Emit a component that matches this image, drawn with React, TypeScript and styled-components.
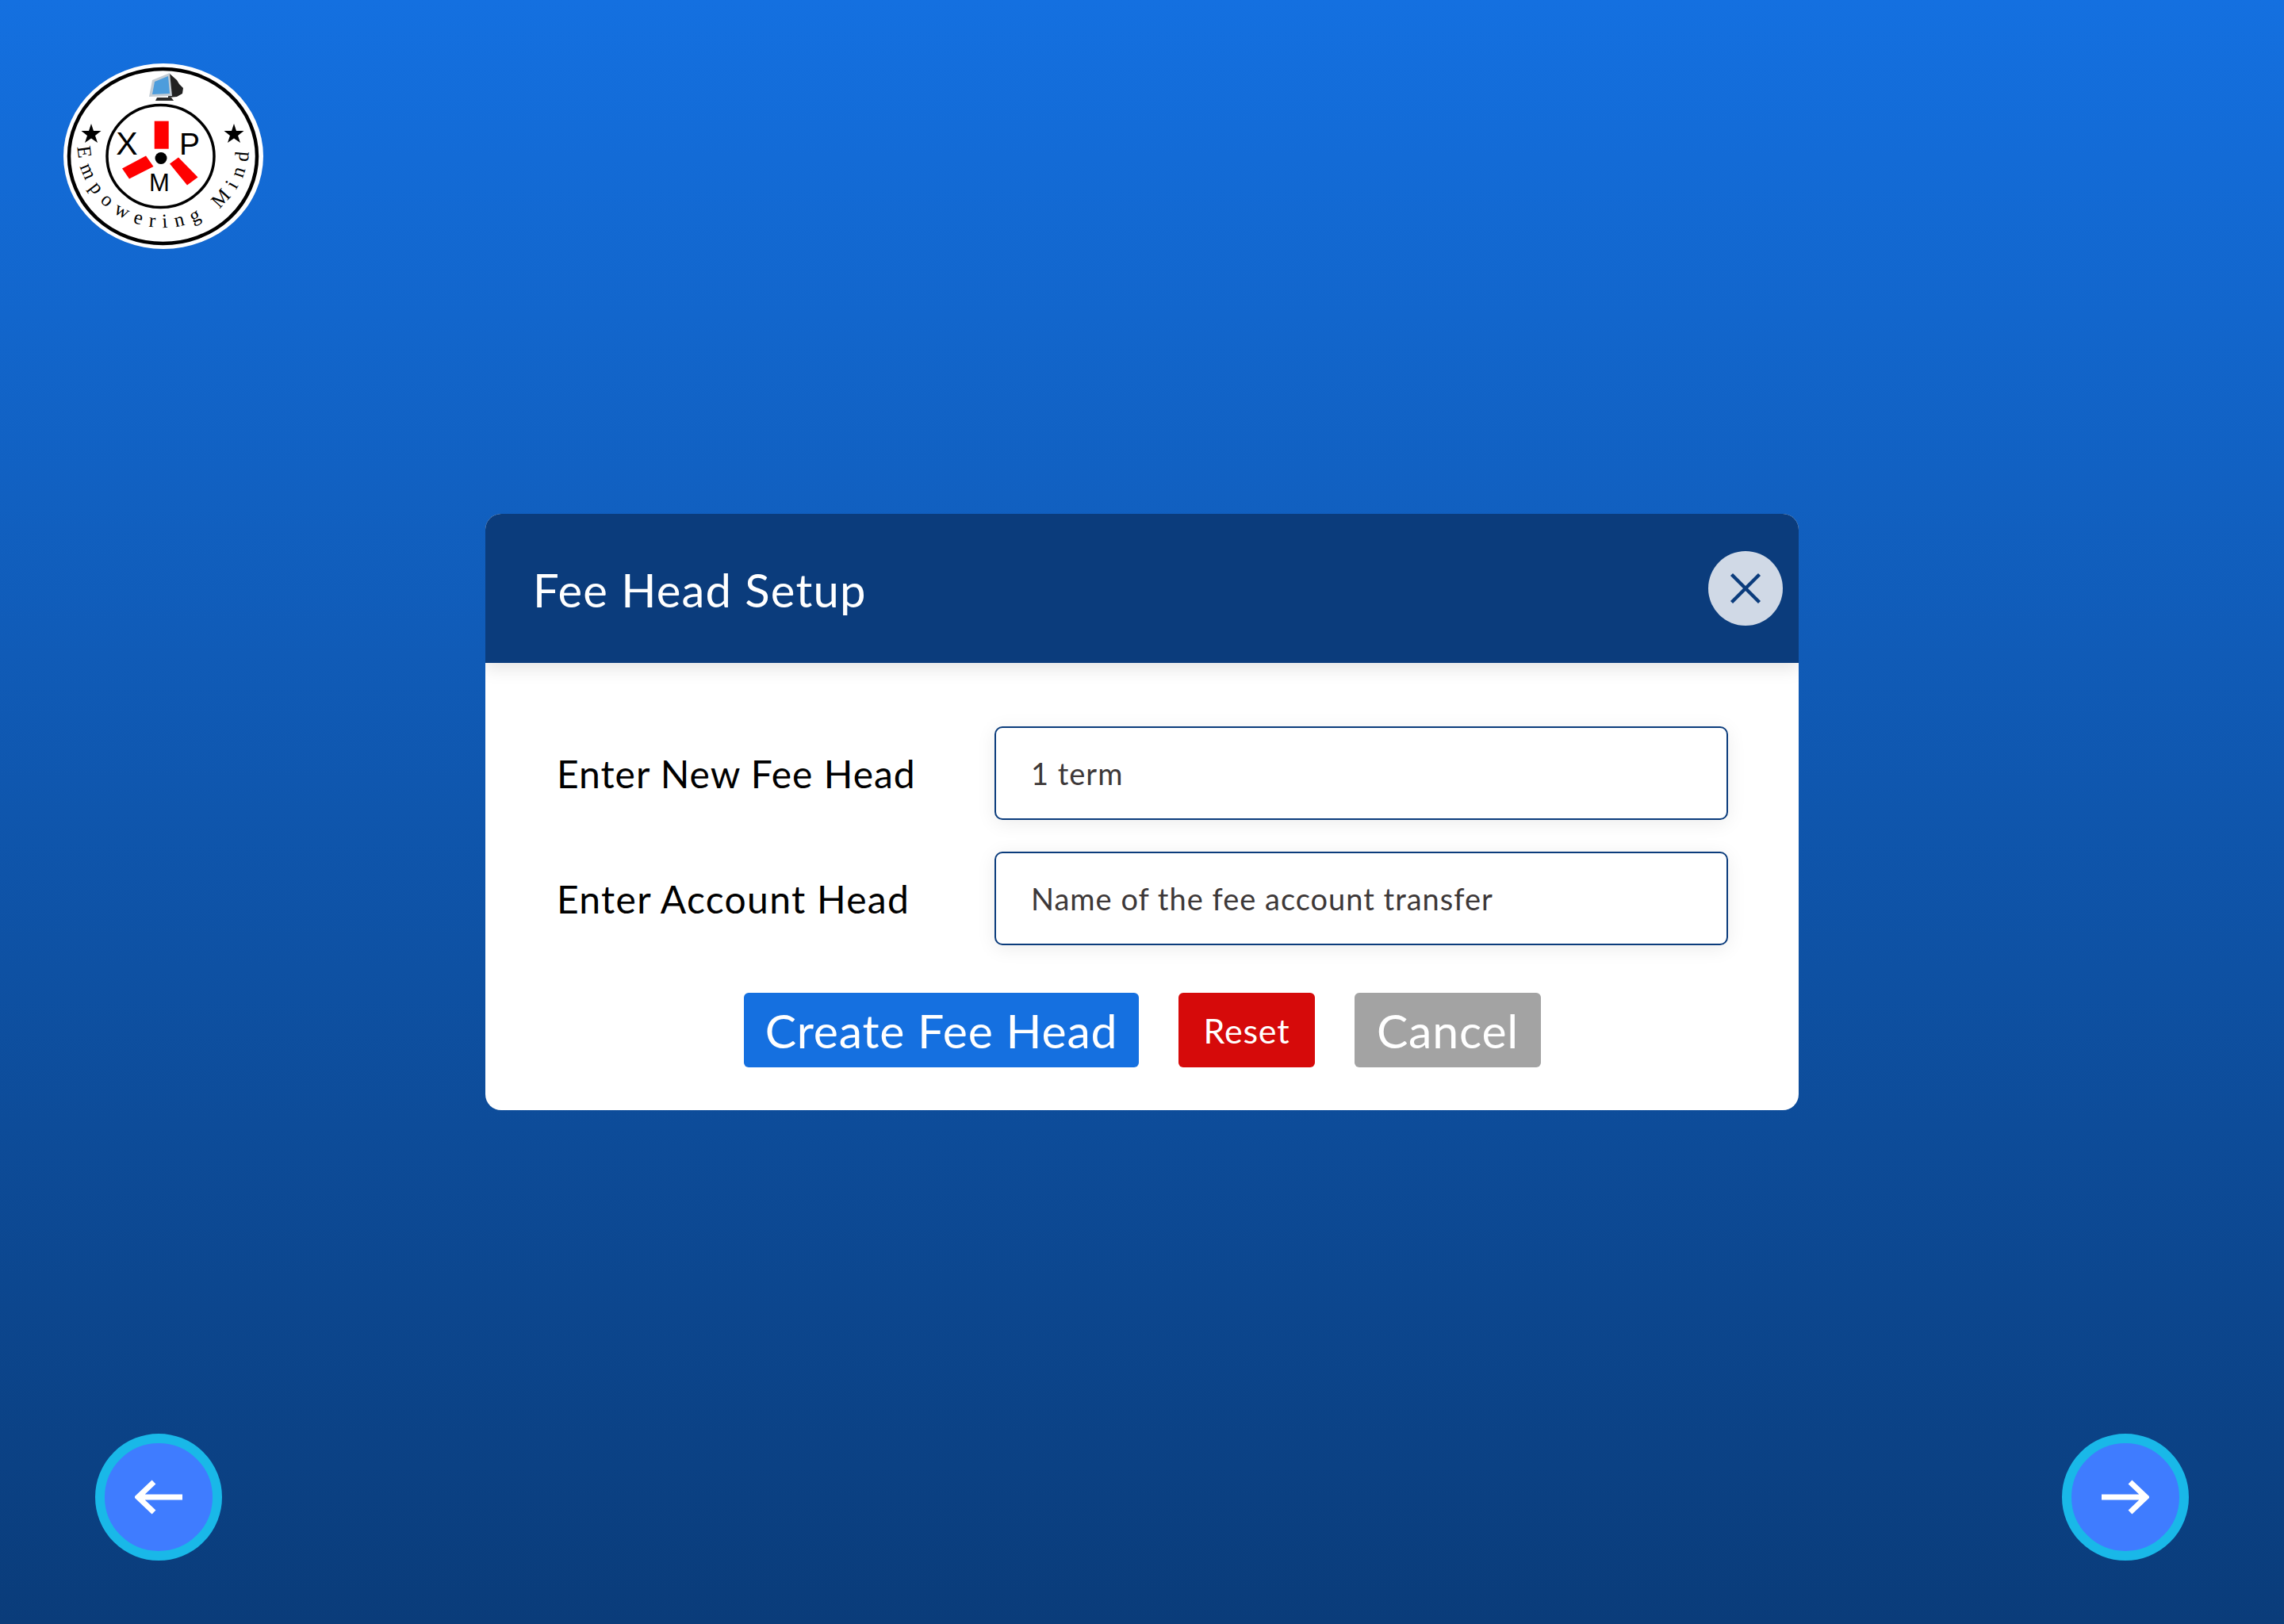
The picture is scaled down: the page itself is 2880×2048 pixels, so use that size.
import React from 'react';
import styled, { createGlobalStyle } from 'styled-components';
import { X } from 'lucide-react';

const GlobalStyle = createGlobalStyle`
    html, body {
        margin: 0;
        padding: 0;
    }
    body {
        font-family: Lato, "Open Sans", sans-serif;
    }
`
const Page = styled.div`
    width: 2880px;
    height: 2048px;
    display: grid;
    grid-template-rows: 1fr auto 1fr;
    background: linear-gradient(180deg, #1470e0 0%, #0a3c7a 100%);
`
const TopBar = styled.div`
    padding: 80px 0 0 80px;
`
const Logo = styled.svg`
    display: block;
    width: 252px;
    height: 234px;
`
const Modal = styled.div`
    width: 1656px;
    justify-self: center;
    background: #fff;
    border-radius: 20px;
    overflow: hidden;
`
const ModalHeader = styled.div`
    height: 188px;
    display: flex;
    align-items: center;
    justify-content: space-between;
    padding: 0 20px 0 60px;
    background: #0b3c7c;
    box-shadow: 0 8px 20px rgba(0, 0, 0, 0.1);
    position: relative;
`
const Title = styled.h1`
    margin: 3px 0 0;
    font-size: 58px;
    font-weight: 400;
    letter-spacing: 1.2px;
    color: #fff;
`
const CloseButton = styled.button`
    width: 94px;
    height: 94px;
    padding: 0;
    border: none;
    border-radius: 50%;
    background: #d0d9e6;
    color: #0b3c7c;
    display: flex;
    align-items: center;
    justify-content: center;
`
const ModalBody = styled.div`
    padding: 80px 89px 54px 90px;
    display: flex;
    flex-direction: column;
`
const FieldGrid = styled.div`
    display: grid;
    grid-template-columns: 552px 1fr;
    row-gap: 40px;
    align-items: center;
`
const Label = styled.label<{ $spacing: number }>`
    font-size: 48px;
    letter-spacing: ${(props) => props.$spacing}px;
    color: #000;
`
const Input = styled.input`
    box-sizing: border-box;
    width: 100%;
    height: 118px;
    padding: 0 44px;
    border: 2px solid #0b3c7c;
    border-radius: 10px;
    background: #fff;
    box-shadow: 0 4px 24px rgba(0, 0, 0, 0.08);
    font-family: inherit;
    font-size: 38px;
    letter-spacing: 1px;
    color: #3d3838;
    outline: none;
`
const Actions = styled.div`
    margin-top: 60px;
    display: flex;
    justify-content: center;
    gap: 50px;
`
const ActionButton = styled.button<{ $bg: string; $small?: boolean; $width: number }>`
    height: 94px;
    width: ${(props) => props.$width}px;
    padding: 0;
    border: none;
    border-radius: 6px;
    background: ${(props) => props.$bg};
    color: #fff;
    font-family: inherit;
    font-size: ${(props) => (props.$small ? '43px' : '59px')};
    letter-spacing: 0.8px;
`
const BottomBar = styled.div`
    align-self: end;
    display: flex;
    justify-content: space-between;
    padding: 0 120px 80px;
`
const NavButton = styled.button`
    box-sizing: border-box;
    width: 160px;
    height: 160px;
    padding: 0;
    border: 12px solid #19b8e8;
    border-radius: 50%;
    background: #3f7cff;
    color: #fff;
    display: flex;
    align-items: center;
    justify-content: center;
`
const NavArrow = styled.svg<{ $flip?: boolean }>`
    width: 60px;
    height: 44px;
    transform: ${(props) => (props.$flip ? 'scaleX(-1)' : 'none')};
`

const LogoMark: React.FC = () => (
    <Logo viewBox="0 0 252 234">
        <ellipse cx="126" cy="117" rx="126" ry="117" fill="#fff" />
        <ellipse cx="125.500" cy="117" rx="118.500" ry="110" fill="none" stroke="#000" strokeWidth="4.500" />
        <ellipse cx="122.500" cy="117" rx="67.500" ry="64.500" fill="none" stroke="#000" strokeWidth="3.500" />
        {/* monitor */}
        <path d="M134 13 L143 21 L146 26 L151 31 L150 38 L143 42 L132 43 Z" fill="#222" />
        <path d="M134 12 L137 41 L108 42 L112 21 Z" fill="#c3ccd4" />
        <path d="M132 16 L134 38 L112 39 L115 23 Z" fill="#4d9ddc" />
        <path d="M118 43 H136 L139 47 H116 Z" fill="#2a2a2a" />
        {/* blades */}
        <rect x="114.700" y="72.700" width="18" height="35" fill="#f00" />
        <polygon points="74,132.500 104,116.500 113.500,130 83,145.500" fill="#f00" />
        <polygon points="145,118.500 169.500,143.500 156,153.500 134,126.500" fill="#f00" />
        <circle cx="123" cy="119.500" r="7.500" fill="#000" />
        <g fontFamily='"Liberation Sans", Arial, sans-serif' fill="#000" textAnchor="middle">
            <text x="80" y="115" fontSize="41">X</text>
            <text x="159" y="115" fontSize="39">P</text>
            <text x="121" y="161" fontSize="31">M</text>
        </g>
        <polygon fill="#000" points="35,76 38,85 47.500,85 40,91 43,100 35,94.500 27,100 30,91 22.500,85 32,85" />
        <polygon fill="#000" points="215,76 218,85 227.500,85 220,91 223,100 215,94.500 207,100 210,91 202.500,85 212,85" />
        <path id="logoArc" fill="none" d="M18 105 A108 102 0 0 0 234 105" />
        <text fontFamily='"Liberation Serif", "Times New Roman", serif' fontSize="25" fill="#000" letterSpacing="9.500">
            <textPath href="#logoArc" startOffset="0">Empowering Mind</textPath>
        </text>
    </Logo>
);

const BackIcon: React.FC<{ flip?: boolean }> = ({ flip }) => (
    <NavArrow viewBox="0 0 60 44" $flip={flip}>
        <path d="M60 22 H4 M24 3 L4 22 L24 41" fill="none" stroke="currentColor" strokeWidth="7" />
    </NavArrow>
);

const App: React.FC = () => {
    return (
        <Page>
            <GlobalStyle />
            <TopBar>
                <LogoMark />
            </TopBar>
            <Modal>
                <ModalHeader>
                    <Title>Fee Head Setup</Title>
                    <CloseButton type="button" aria-label="Close">
                        <X size={70} strokeWidth={1.5} strokeLinecap="butt" />
                    </CloseButton>
                </ModalHeader>
                <ModalBody>
                    <FieldGrid>
                        <Label $spacing={1}>Enter New Fee Head</Label>
                        <Input defaultValue="1 term" />
                        <Label $spacing={1.3}>Enter Account Head</Label>
                        <Input defaultValue="Name of the fee account transfer" />
                    </FieldGrid>
                    <Actions>
                        <ActionButton type="button" $bg="#1570e0" $width={498}>Create Fee Head</ActionButton>
                        <ActionButton type="button" $bg="#d60a0a" $width={172} $small>Reset</ActionButton>
                        <ActionButton type="button" $bg="#a3a3a3" $width={235}>Cancel</ActionButton>
                    </Actions>
                </ModalBody>
            </Modal>
            <BottomBar>
                <NavButton type="button" aria-label="Back">
                    <BackIcon />
                </NavButton>
                <NavButton type="button" aria-label="Next">
                    <BackIcon flip />
                </NavButton>
            </BottomBar>
        </Page>
    );
};

export default App;
